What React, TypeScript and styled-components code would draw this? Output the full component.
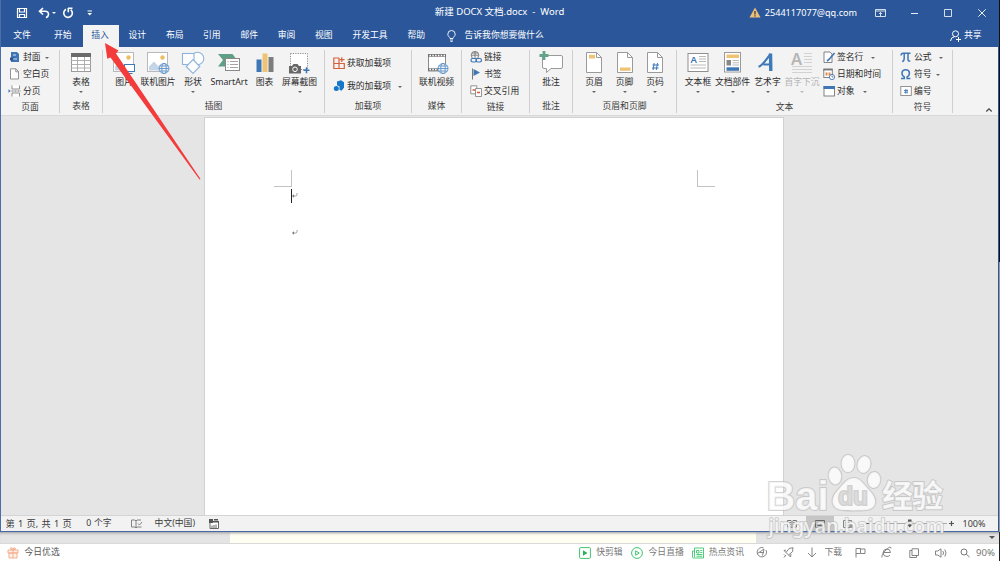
import React from 'react';
import styled, { createGlobalStyle, css } from 'styled-components';

const GlobalStyle = createGlobalStyle`
  * { box-sizing: border-box; }
  html, body { margin: 0; padding: 0; overflow: hidden; }
  body { font-family: "Noto Sans", "Noto Sans CJK SC", sans-serif; font-size: 8.8px; background: #fff; }
  svg { display: block; flex: none; overflow: visible; }
`;

const Screen = styled.div`
  position: relative;
  width: 1000px;
  height: 561px;
  overflow: hidden;
  background: #e4e4e4;
`;

const WordWindow = styled.div`
  width: 999px;
  height: 532px;
  display: flex;
  flex-direction: column;
  border-left: 1px solid #4a6ea9;
  border-bottom: 1px solid #4669a6;
  border-right: 1px solid #2b579a;
  color: #2c2c2c;
`;

const TitleBar = styled.header`
  height: 25px;
  display: grid;
  grid-template-columns: 1fr auto 1fr;
  align-items: center;
  background: #2b579a;
  color: #fff;
  line-height: 23px;
`;

const QuickAccess = styled.div`
  display: flex;
  align-items: center;
  padding-left: 15px;
`;

const Gap = styled.span<{ $w: number }>`
  flex: none;
  width: ${p => p.$w}px;
`;

const Title = styled.div`
  font-size: 9.5px;
  white-space: pre;
  height: 25px;
`;

const TitleActions = styled.div`
  display: flex;
  align-items: center;
  justify-content: flex-end;
  padding-right: 12px;
  height: 23px;
`;

const Account = styled.span`
  font-size: 9.1px;
  margin: 0 18px 0 4px;
`;

const TabBar = styled.nav`
  height: 22px;
  display: flex;
  background: #2b579a;
  color: #fff;
  line-height: 21px;
`;

const Tab = styled.div<{ $w: number; $active?: boolean }>`
  width: ${p => p.$w}px;
  padding-right: 1px;
  text-align: center;
  white-space: nowrap;
  ${p => p.$active && css`background: #f3f3f3; color: #2b579a;`}
`;

const TellMe = styled.div`
  display: flex;
  align-items: center;
  gap: 9px;
  margin-left: 11px;
  height: 21px;
`;

const Share = styled.div`
  display: flex;
  align-items: center;
  gap: 3px;
  height: 21px;
  margin-left: auto;
  padding-right: 16.5px;
`;

const Ribbon = styled.div`
  height: 69px;
  display: flex;
  padding-top: 3px;
  background: #f3f3f3;
  border-bottom: 1px solid #d9d9d9;
`;

const Group = styled.section<{ $w: number }>`
  width: ${p => p.$w}px;
  height: 63px;
  flex: none;
  display: flex;
  flex-direction: column;
  border-right: 1px solid #cfcfcf;
`;

const GroupBody = styled.div<{ $pad?: number }>`
  height: 52px;
  display: flex;
  padding-left: ${p => p.$pad ?? 0}px;
`;

const GroupLabel = styled.div`
  text-align: center;
  line-height: 14px;
  color: #3c3c3c;
`;

const BigButton = styled.div<{ $w: number; $off?: boolean }>`
  width: ${p => p.$w}px;
  flex: none;
  display: flex;
  flex-direction: column;
  align-items: center;
  white-space: nowrap;
  color: ${p => (p.$off ? '#b3b3b3' : 'inherit')};
`;

const BigLabel = styled.span`
  line-height: 14px;
  height: 16px;
  margin-top: 1px;
`;

const Caret = styled.i<{ $color?: string; $s?: number }>`
  flex: none;
  border: ${p => p.$s ?? 2}px solid transparent;
  border-top-color: ${p => p.$color ?? '#666'};
  border-bottom: 0;
`;

const Stack = styled.div<{ $ml?: number; $pitch?: number; $mt?: number }>`
  display: flex;
  flex-direction: column;
  margin-left: ${p => p.$ml ?? 0}px;
  margin-top: ${p => p.$mt ?? -1}px;
  line-height: ${p => p.$pitch ?? 17}px;
`;

const SmallRow = styled.div<{ $gap?: number; $pitch?: number }>`
  display: flex;
  align-items: center;
  white-space: nowrap;
  height: ${p => p.$pitch ?? 17}px;
  gap: ${p => p.$gap ?? 2}px;

  svg { margin-bottom: 1px; }
`;

const Collapse = styled.div`
  margin: auto 6px 3px auto;
`;

const Canvas = styled.main`
  height: 399px;
  display: flex;
  background: #e5e5e5;
  padding: 1px 0 0 203px;
`;

const Paper = styled.article`
  width: 580px;
  background: #fff;
  border: 1px solid #d2d2d2;
  border-bottom: 0;
  padding: 52px 68px 0 69px;
`;

const Margins = styled.div`
  display: flex;
  justify-content: space-between;
`;

const Crop = styled.div<{ $side: 'left' | 'right' }>`
  width: 18px;
  height: 17px;
  border-bottom: 1px solid #c3c3c3;
  ${p => (p.$side === 'left' ? 'border-right' : 'border-left')}: 1px solid #c3c3c3;
`;

const Paragraph = styled.div`
  display: flex;
  align-items: center;
  height: 17px;
  margin: 0 0 20px 17px;
`;

const TextCursor = styled.span<{ $on?: boolean }>`
  width: 1px;
  height: 14px;
  background: ${p => (p.$on ? '#222' : 'transparent')};
`;

const StatusBar = styled.footer`
  height: 16px;
  display: flex;
  align-items: center;
  background: #f2f2f2;
  border-top: 1px solid #d4d4d4;
  line-height: 15px;
  padding-left: 4.500px;
  color: #3c3c3c;
`;

const StatusItem = styled.span<{ $mr?: number; $size?: number; $word?: number }>`
  font-size: ${p => p.$size ?? 8.8}px;
  margin-right: ${p => p.$mr ?? 0}px;
  word-spacing: ${p => p.$word ?? 0}px;
  white-space: nowrap;
`;

const ViewSwitch = styled.div<{ $on?: boolean }>`
  width: 28px;
  height: 15px;
  display: flex;
  align-items: center;
  justify-content: center;
  background: ${p => (p.$on ? '#c6c6c6' : 'transparent')};
`;

const Zoomer = styled.div`
  display: flex;
  align-items: center;
  margin-left: auto;
  padding-right: 12.5px;
`;

const BackStrip = styled.div`
  height: 12px;
  display: flex;
  align-items: center;
  justify-content: flex-end;
  background: linear-gradient(90deg, #e4e4e4 230px, #fffff2 230px, #fffff2 756px, #e4e4e4 756px);
  border-bottom: 1px solid #d9d9d9;
  box-shadow: inset 0 3px 3px -2px #9a9a9a;
  padding-right: 5px;
`;

const BrowserBar = styled.div`
  height: 17px;
  display: flex;
  align-items: center;
  background: #fff;
  color: #777;
  line-height: 17px;
  padding-left: 7px;
`;

const Promo = styled.span`
  color: #555;
`;

const BrowserItems = styled.div`
  display: flex;
  align-items: center;
  margin-left: auto;
  padding-right: 5px;
`;

const BrowserZoom = styled.span`
  font-size: 9.6px;
`;

const ScreenEdge = styled.div`
  position: absolute;
  right: 0;
  top: 0;
  width: 1px;
  height: 561px;
  background: linear-gradient(#111 262px, #999 262px, #999 532px, #222 532px);
`;

const Overlay = styled.svg`
  position: absolute;
  left: 0;
  top: 0;
  pointer-events: none;
`;

const Globe = ({ x, y, r = 5 }: { x: number; y: number; r?: number }) => (
  <g fill="#f3f3f3" stroke="#5b92c9" strokeWidth="0.9">
    <circle cx={x} cy={y} r={r} />
    <ellipse cx={x} cy={y} rx={r * 0.45} ry={r} fill="none" />
    <path d={`M${x - r} ${y}h${2 * r}M${x - r * 0.85} ${y - r / 2}h${r * 1.7}M${x - r * 0.85} ${y + r / 2}h${r * 1.7}`} />
  </g>
);

const Photo = () => (
  <g>
    <rect x="1.500" y="2.500" width="20" height="19" fill="#fff" stroke="#b9b9b9" />
    <path d="M3 20.500v-4l5-5 4.500 5 2.500-2.500 5 5v1.500z" fill="#c3d5e6" />
    <circle cx="16.500" cy="7.500" r="2.200" fill="#eebc62" />
  </g>
);

const NotePage = () => (
  <g>
    <path d="M4.500 2.500h10l5 5v15h-15z" fill="#fff" stroke="#9a9a9a" />
    <path d="M14.500 2.500v5h5" fill="none" stroke="#9a9a9a" />
  </g>
);

const bigIcons: Record<string, React.ReactNode> = {
  table: (
    <g>
      <rect x="2.500" y="3.500" width="19" height="18" fill="#fff" stroke="#9a9a9a" />
      <path d="M2 3h20v4H2z" fill="#6a6a6a" />
      <path d="M2 10.500h20M2 14.500h20M2 18h20M8.500 7v15M15.500 7v15" stroke="#a8a8a8" strokeWidth="0.9" />
    </g>
  ),
  picture: (
    <g>
      <Photo />
      <rect x="12.500" y="14.500" width="10" height="7" fill="#fff" stroke="#3d7ab8" />
      <path d="M14.500 23.500h6" stroke="#3d7ab8" />
    </g>
  ),
  online: (
    <g><Photo /><Globe x={18} y={18.5} /></g>
  ),
  shapes: (
    <g fill="#fdfdfd" stroke="#8db4dc" strokeWidth="1.100">
      <circle cx="16.500" cy="8.500" r="6.300" />
      <rect x="1.500" y="3.500" width="11.500" height="11" />
      <path d="M12 9.500l6.800 7-6.800 7-6.800-7z" />
    </g>
  ),
  smart: (
    <g>
      <path d="M1 4h14.500l4.500 6-4 6.500H1l5-6.500z" fill="#5f9f85" />
      <rect x="8.500" y="8.500" width="14" height="12" fill="#fff" stroke="#8a8a8a" />
      <path d="M10.500 11.500h1M13 11.500h8M10.500 14.500h1M13 14.500h8M10.500 17.500h1M13 17.500h8" stroke="#999" strokeWidth="0.9" />
    </g>
  ),
  chart: (
    <g>
      <path d="M3.500 9.500h5V22h-5z" fill="#3f77b5" />
      <path d="M9.500 3.500h5V22h-5z" fill="#eec373" />
      <path d="M15.500 7h5v15h-5z" fill="#7d7d7d" />
    </g>
  ),
  screenshot: (
    <g>
      <rect x="2.500" y="3.500" width="17" height="16" fill="#fff" stroke="#8e8e8e" strokeDasharray="1.200 1.200" />
      <path d="M1 16h3l1.500-2h4l1.500 2h2v7.500H1z" fill="#686868" />
      <circle cx="7" cy="19.300" r="2.300" fill="none" stroke="#fff" strokeWidth="1" />
      <path d="M18.500 17.300v6M15.500 20.300h6" stroke="#3975b5" strokeWidth="1.500" />
    </g>
  ),
  video: (
    <g>
      <rect x="3.500" y="4.500" width="17" height="16.500" fill="#fff" stroke="#8a8a8a" />
      <path d="M3 5.500h18M3 19.500h18" stroke="#6c6c6c" strokeWidth="2.600" />
      <path d="M4.500 5.500h16M4.500 19.500h16" stroke="#fff" strokeWidth="1.300" strokeDasharray="1.500 1.300" />
      <Globe x={18} y={18.5} />
    </g>
  ),
  comment: (
    <g>
      <path d="M5 5.500h17q1.500 0 1.500 1.500v10q0 1.500-1.500 1.500H12L7.500 22.500v-4H5q-1.500 0-1.500-1.500V7" fill="#fff" stroke="#9a9a9a" />
      <path d="M5 1v9M.5 5.500h9" stroke="#62a487" strokeWidth="2.800" />
    </g>
  ),
  header: (
    <g>
      <NotePage />
      <path d="M7 4.800h6v3.700H7z" fill="#eec373" />
    </g>
  ),
  footer: (
    <g>
      <NotePage />
      <path d="M7 17.500h10.500v3.300H7z" fill="#eec373" />
    </g>
  ),
  number: (
    <g>
      <NotePage />
      <path d="M11.200 13l-1.200 7M14.500 13l-1.200 7M9.500 15h6.500M9 18h6.500" stroke="#3975b5" strokeWidth="1" />
    </g>
  ),
  textbox: (
    <g>
      <rect x="2" y="3.500" width="20" height="18" fill="#fff" stroke="#8f8f8f" />
      <text x="4.500" y="13" fontSize="9.500" fontWeight="600" fill="#3f77b5">A</text>
      <path d="M13 6.500h7M13 9h7M13 11.500h7M4.500 15h15.500M4.500 18h15.500" stroke="#b2b2b2" strokeWidth="0.900" />
    </g>
  ),
  parts: (
    <g>
      <rect x="3.500" y="2.500" width="16" height="19.500" fill="#fff" stroke="#9a9a9a" />
      <path d="M5.500 4.500h12.500v3.500H5.500z" fill="#eec373" />
      <path d="M5.500 10h4.500v5.500H5.500z" fill="#888" />
      <path d="M11.500 10.500h6.500M11.500 12.800h6.500M11.500 15h6.500" stroke="#b2b2b2" strokeWidth="0.900" />
      <path d="M5.500 17.300h12.500v3.500H5.500z" fill="#3f77b5" />
    </g>
  ),
  wordart: (
    <g fill="none" stroke="#4079b7">
      <path d="M2.500 16.800C7 15.500 10.500 9 14.500 4" strokeWidth="2.200" />
      <path d="M14.500 3.500L14.800 21" strokeWidth="3.400" />
      <path d="M6.500 14q4 1 8 .2" strokeWidth="2" />
    </g>
  ),
  dropcap: (
    <g>
      <text x="1" y="14.500" fontSize="16.500" fontWeight="600" fill="#b6b6b6">A</text>
      <path d="M14 3.500h8M14 6.500h8M14 9.500h8M14 12.500h8M2 16.500h20M2 19.500h20M2 22.500h20" stroke="#d2d2d2" />
    </g>
  ),
};

const smallIcons: Record<string, React.ReactNode> = {
  cover: (
    <g><path d="M2 1h6l2 2V11H2z" fill="#3f77b5" /><path d="M1 6.500h4.500v3H1z" fill="#2b579a" /><path d="M4 4h3M4 8h4" stroke="#fff" strokeWidth="0.800" /></g>
  ),
  blank: <path d="M1.500.8h5.500L9.500 3.500V11h-8zM6.800 1v2.800h2.700" fill="#fff" stroke="#888" strokeWidth="0.900" />,
  brk: (
    <g fill="none" stroke="#888" strokeWidth="0.900"><path d="M3 .5V4h7.500V.5M3 11.500V8h7.500v3.500" fill="#fff" /><path d="M2.500 6H12" stroke="#666" strokeDasharray="2 1" /><path d="M-.5 4.300L1.700 6-.5 7.700z" fill="#3f77b5" stroke="none" /></g>
  ),
  store: (
    <g fill="none" stroke="#d9603a" strokeWidth="1.200"><path d="M6 1H.8v10.500H11.300V6.500H.8M6 1v10.500" /><path d="M8.800.2v4.800M6.500 2.600h5" /></g>
  ),
  addin: (
    <g fill="#1477c9"><path d="M4 1.500L8 .3l3 2v5.500l-2.500 3-2-1V6.500L4 5.300z" /><circle cx="3.300" cy="8.500" r="2.500" /></g>
  ),
  link: (
    <g fill="none" stroke="#777" strokeWidth="0.900"><circle cx="5" cy="4.200" r="3.800" /><path d="M1.200 4.200h7.600M5 .4v7.500M2 2h6" /><rect x="1" y="7.500" width="5.500" height="3.500" rx="1.700" stroke="#3f77b5" fill="#f3f3f3" strokeWidth="1.200" /><rect x="6" y="7.500" width="5.500" height="3.500" rx="1.700" stroke="#3f77b5" strokeWidth="1.200" /></g>
  ),
  bookmark: <g><path d="M2.500.5v11" stroke="#777" /><path d="M3.500 1L10 4.500 3.500 8z" fill="#3f77b5" /></g>,
  cross: (
    <g stroke="#888" strokeWidth="0.900" fill="#fff"><path d="M.8.800h6v8h-6z" /><path d="M5.500 3.500h6v8h-6z" /><path d="M2.500 5h2.500M7 7.500h3" stroke="#d65a38" strokeWidth="1.600" /></g>
  ),
  sign: (
    <g><path d="M1 1h6l2 2v8.500H1z" fill="#fff" stroke="#777" strokeWidth="0.900" /><path d="M11.500 2L6 8.500l-2 1.500" stroke="#3f77b5" strokeWidth="1.700" fill="none" /></g>
  ),
  date: (
    <g><rect x=".8" y="1" width="8.500" height="8.500" fill="#fff" stroke="#777" strokeWidth="0.900" /><path d="M.5 1.700h9" stroke="#777" strokeWidth="1.500" /><path d="M2.500 4.500h2v3h-2zM5.500 4.500h2v3h-2z" fill="#e08a4e" /><circle cx="9" cy="9" r="2.600" fill="#fff" stroke="#3f77b5" strokeWidth="0.900" /><path d="M9 7.500V9h1.300" stroke="#555" strokeWidth="0.700" fill="none" /></g>
  ),
  object: <g><rect x="1" y="1.500" width="10.500" height="9.500" fill="#fff" stroke="#777" strokeWidth="0.900" /><path d="M.5 1h11.500v3H.5z" fill="#3f77b5" /></g>,
  pi: <path d="M1 4.500q.3-2.300 2-2.300h7.500M4.200 2.200v5q0 3-2 3.300M8 2.200v6.300q0 2 2.300 1.500" fill="none" stroke="#3f77b5" strokeWidth="1.500" />,
  omega: <path d="M1 10.500H4.300V9C1 7 1 1.800 5.700 1.800s4.700 5.200 1.400 7.200v1.500h3.300" fill="none" stroke="#3f77b5" strokeWidth="1.500" />,
  num: <g><rect x=".8" y="1.500" width="10.500" height="9" fill="#fff" stroke="#888" strokeWidth="0.900" /><path d="M4 5.500h4M4 7.300h4M5.500 4.200v4.300M7 4.200v4.300" stroke="#3f77b5" strokeWidth="0.800" /></g>,
};

const Icon = ({ name, box = 12 }: { name: string; box?: number }) => (
  <svg width={box} height={box} viewBox="0 0 12 12">{smallIcons[name]}</svg>
);

const Big = ({ icon, label, w, caret, off }: { icon: string; label: string; w: number; caret?: boolean; off?: boolean }) => (
  <BigButton $w={w} $off={off}>
    <svg width="24" height="24" viewBox="0 0 24 24">{bigIcons[icon]}</svg>
    <BigLabel>{label}</BigLabel>
    {caret && <Caret $color={off ? '#bbb' : undefined} />}
  </BigButton>
);

const Small = ({ icon, label, caret, gap, pitch }: { icon: string; label: string; caret?: number; gap?: number; pitch?: number }) => (
  <SmallRow $gap={gap} $pitch={pitch}>
    <Icon name={icon} />
    <span>{label}</span>
    {caret !== undefined && <><Gap $w={caret} /><Caret /></>}
  </SmallRow>
);

const tabs: [string, number, boolean?][] = [
  ['文件', 43], ['开始', 38.500], ['插入', 36, true], ['设计', 38.500], ['布局', 36.500], ['引用', 37.500],
  ['邮件', 37.500], ['审阅', 37], ['视图', 37.500], ['开发工具', 55], ['帮助', 37.500],
];

export default function App() {
  return (
    <Screen>
      <GlobalStyle />
      <WordWindow>
        <TitleBar>
          <QuickAccess>
            <svg width="12" height="12" viewBox="0 0 12 12"><path d="M1.500 1.500h9v9h-9zM3.500 1.500v3.500h5V1.500M3.500 10.500V7.500h5v3" fill="none" stroke="#fff" strokeWidth="1.200" /></svg>
            <Gap $w={10} />
            <svg width="12" height="12" viewBox="0 0 12 12"><path d="M5 1L1.500 4.300 5 7.500M1.500 4.300h5.500q3.500 0 3.500 3.200 0 2-2.500 3.200" fill="none" stroke="#fff" strokeWidth="1.600" /></svg>
            <Gap $w={2} />
            <Caret $color="#fff" />
            <Gap $w={6} />
            <svg width="12" height="12" viewBox="0 0 12 12"><path d="M4 2.300A4.300 4.300 0 1 0 8.700 2.700M6 1.300h4.500M6.300 1v4.300" fill="none" stroke="#fff" strokeWidth="1.600" /></svg>
            <Gap $w={13} />
            <svg width="6" height="6" viewBox="0 0 6 6"><path d="M.5 1h4.500" stroke="#fff" /><path d="M.5 3h4.500L2.750 5.500z" fill="#fff" /></svg>
          </QuickAccess>
          <Title>新建 DOCX 文档.docx  -  Word</Title>
          <TitleActions>
            <svg width="12" height="11" viewBox="0 0 12 11"><path d="M6 .5L11.500 10.500H.5z" fill="#ecc078" /><path d="M6 4v3.500M6 8.300v1.200" stroke="#333" strokeWidth="1.200" /></svg>
            <Account>2544117077@qq.com</Account>
            <svg width="11" height="8" viewBox="0 0 11 8"><path d="M.5.500h10v7H.5zM.5 2h10M5.500 7V3.500M4 5l1.500-1.500L7 5" fill="none" stroke="#e6edf6" strokeWidth="0.900" /></svg>
            <Gap $w={24} />
            <svg width="9" height="8" viewBox="0 0 9 8"><path d="M1 4.500h7" stroke="#fff" strokeWidth="0.900" /></svg>
            <Gap $w={25} />
            <svg width="8" height="8" viewBox="0 0 8 8"><path d="M.5.500h7v7h-7z" fill="none" stroke="#e6edf6" strokeWidth="0.900" /></svg>
            <Gap $w={26} />
            <svg width="8" height="8" viewBox="0 0 8 8"><path d="M.3.300l7.400 7.400M7.700.300L.3 7.700" stroke="#fff" strokeWidth="0.900" /></svg>
          </TitleActions>
        </TitleBar>
        <TabBar>
          {tabs.map(([name, w, on]) => <Tab key={name} $w={w} $active={on}>{name}</Tab>)}
          <TellMe>
            <svg width="9" height="12" viewBox="0 0 9 12"><path d="M3 8.500C3 7 .8 6.500.8 4.200a3.700 3.700 0 0 1 7.400 0C8.200 6.500 6 7 6 8.500zM3 10h3M3.500 11.500h2" fill="none" stroke="#fff" strokeWidth="0.900" /></svg>
            <span>告诉我你想要做什么</span>
          </TellMe>
          <Share>
            <svg width="11" height="12" viewBox="0 0 11 12"><circle cx="5.500" cy="3.800" r="3" fill="none" stroke="#fff" /><path d="M.5 11q.5-4 4-4.300M8.500 7v5M6 9.500h5" fill="none" stroke="#fff" /></svg>
            <span>共享</span>
          </Share>
        </TabBar>
        <Ribbon>
          <Group $w={59}>
            <GroupBody $pad={8}>
              <Stack>
                <Small icon="cover" label="封面" caret={-3} />
                <Small icon="blank" label="空白页" />
                <Small icon="brk" label="分页" />
              </Stack>
            </GroupBody>
            <GroupLabel>页面</GroupLabel>
          </Group>
          <Group $w={43}>
            <GroupBody><Big icon="table" label="表格" w={42} caret /></GroupBody>
            <GroupLabel>表格</GroupLabel>
          </Group>
          <Group $w={222}>
            <GroupBody $pad={5}>
              <Big icon="picture" label="图片" w={32} />
              <Big icon="online" label="联机图片" w={36} />
              <Big icon="shapes" label="形状" w={34} caret />
              <Big icon="smart" label="SmartArt" w={38} />
              <Big icon="chart" label="图表" w={33} />
              <Big icon="screenshot" label="屏幕截图" w={37} caret />
            </GroupBody>
            <GroupLabel>插图</GroupLabel>
          </Group>
          <Group $w={87}>
            <GroupBody $pad={8}>
              <Stack $mt={2} $pitch={23}>
                <Small icon="store" label="获取加载项" pitch={23} />
                <Small icon="addin" label="我的加载项" pitch={23} caret={3} />
              </Stack>
            </GroupBody>
            <GroupLabel>加载项</GroupLabel>
          </Group>
          <Group $w={50}>
            <GroupBody><Big icon="video" label="联机视频" w={49} /></GroupBody>
            <GroupLabel>媒体</GroupLabel>
          </Group>
          <Group $w={68}>
            <GroupBody $pad={8}>
              <Stack>
                <Small icon="link" label="链接" />
                <Small icon="bookmark" label="书签" />
                <Small icon="cross" label="交叉引用" />
              </Stack>
            </GroupBody>
            <GroupLabel>链接</GroupLabel>
          </Group>
          <Group $w={43}>
            <GroupBody><Big icon="comment" label="批注" w={42} /></GroupBody>
            <GroupLabel>批注</GroupLabel>
          </Group>
          <Group $w={104}>
            <GroupBody $pad={6}>
              <Big icon="header" label="页眉" w={30} caret />
              <Big icon="footer" label="页脚" w={31} caret />
              <Big icon="number" label="页码" w={30} caret />
            </GroupBody>
            <GroupLabel>页眉和页脚</GroupLabel>
          </Group>
          <Group $w={216}>
            <GroupBody $pad={4}>
              <Big icon="textbox" label="文本框" w={34} caret />
              <Big icon="parts" label="文档部件" w={35} caret />
              <Big icon="wordart" label="艺术字" w={35} caret />
              <Big icon="dropcap" label="首字下沉" w={34} caret off />
              <Stack $ml={4}>
                <Small icon="sign" label="签名行" caret={4} />
                <Small icon="date" label="日期和时间" />
                <Small icon="object" label="对象" caret={4} />
              </Stack>
            </GroupBody>
            <GroupLabel>文本</GroupLabel>
          </Group>
          <Group $w={60}>
            <GroupBody $pad={7}>
              <Stack>
                <Small icon="pi" label="公式" caret={3} />
                <Small icon="omega" label="符号" caret={-1} />
                <Small icon="num" label="编号" />
              </Stack>
            </GroupBody>
            <GroupLabel>符号</GroupLabel>
          </Group>
          <Collapse><svg width="6" height="4" viewBox="0 0 6 4"><path d="M.3 3.500L3 .8l2.700 2.700" fill="none" stroke="#444" strokeWidth="1.200" /></svg></Collapse>
        </Ribbon>
        <Canvas>
          <Paper>
            <Margins><Crop $side="left" /><Crop $side="right" /></Margins>
            {[true, false].map((on, i) => (
              <Paragraph key={i}>
                <TextCursor $on={on} />
                <svg width="5" height="5" viewBox="0 0 5 5"><path d="M5 0v1.500q0 1.500-1.500 1.500H1" fill="none" stroke="#888" strokeWidth="0.800" /><path d="M0 3l2-1.800v3.600z" fill="#777" /></svg>
              </Paragraph>
            ))}
          </Paper>
        </Canvas>
        <StatusBar>
          <StatusItem $mr={14.500} $size={9.2} $word={0.9}>第 1 页,  共 1 页</StatusItem>
          <StatusItem $mr={19} $word={0.5}>0 个字</StatusItem>
          <svg width="11" height="10" viewBox="0 0 11 10"><path d="M5 9L4 8H.5V1H4l1 1v7l1-1h4.500M5 2l1-1h4M7 4.500l1.500 1.500L11 3" fill="none" stroke="#777" strokeWidth="0.900" /></svg>
          <Gap $w={13} />
          <StatusItem $mr={14}>中文(中国)</StatusItem>
          <svg width="10" height="10" viewBox="0 0 10 10"><path d="M1 2.500h8.500v7H1z" fill="#fff" stroke="#666" /><path d="M0 0h4v4H0zM5 0h4v1.500H5zM4 2h6v1.500H4z" fill="#555" /><path d="M3 9V6.500M5 9V6M7 9V5.500" stroke="#666" /></svg>
          <Zoomer>
            <ViewSwitch><svg width="10" height="8" viewBox="0 0 10 8"><path d="M5 1.500L4 .5H.5v6.500H4l1 .8 1-.8h3.500V.5H6zM5 1.500v6M1.500 2.500H4M1.500 4.500H4M6 2.500h2.500M6 4.500h2.500" fill="none" stroke="#666" strokeWidth="0.900" /></svg></ViewSwitch>
            <ViewSwitch $on><svg width="10" height="8" viewBox="0 0 10 8"><path d="M.5.500h9v7h-9zM2 2.500h6M2 4h6M2 5.500h6" fill="none" stroke="#666" /></svg></ViewSwitch>
            <ViewSwitch><svg width="10" height="8" viewBox="0 0 10 8"><path d="M.5.500h8v7h-8zM2 2.500h5M2 4h4M2 5.500h3" fill="none" stroke="#777" strokeWidth="0.900" /><circle cx="8" cy="6" r="2" fill="#999" /></svg></ViewSwitch>
            <Gap $w={3} />
            <svg width="90" height="9" viewBox="0 0 90 9"><path d="M.5 4.500h5M84 4.500h5M86.500 2v5" stroke="#555" strokeWidth="1.200" /><path d="M8 4.500h74" stroke="#aaa" /><path d="M43 .5h3.500v6L44.750 8.500 43 6.500z" fill="#555" /></svg>
            <Gap $w={8} />
            <StatusItem $size={9}>100%</StatusItem>
          </Zoomer>
        </StatusBar>
      </WordWindow>
      <BackStrip><Caret $color="#555" $s={3} /></BackStrip>
      <BrowserBar>
        <svg width="12" height="12" viewBox="0 0 12 12"><path d="M1 3h10v3H1zM2 6h8v5H2zM6 3v8M6 3Q3 3 3.500 1T6 3q0-3 2-2t-2 2" fill="#fff1e9" stroke="#f3ae8d" /></svg>
        <Gap $w={5.5} />
        <Promo>今日优选</Promo>
        <BrowserItems>
          <svg width="12" height="12" viewBox="0 0 12 12"><rect x=".6" y=".6" width="10.800" height="10.800" rx="1" fill="#fff" stroke="#3cc56c" /><path d="M4 3.300L8.500 6 4 8.700z" fill="#24b356" /></svg>
          <Gap $w={5.5} /><span>快剪辑</span><Gap $w={8} />
          <svg width="12" height="12" viewBox="0 0 12 12"><circle cx="6" cy="6" r="5.400" fill="none" stroke="#3cc56c" /><path d="M4.700 3.800L8.200 6 4.700 8.200z" fill="none" stroke="#3cc56c" /></svg>
          <Gap $w={6} /><span>今日直播</span><Gap $w={8} />
          <svg width="12" height="12" viewBox="0 0 12 12"><path d="M2.500 1h9v10h-10q-1 0-1-1V4h2zM2.500 4v6M4.500 3.500h2.500V6H4.500zM8.300 3.500h2M8.300 5.500h2M4.500 7.500h5.800M4.500 9.200h5.800" fill="none" stroke="#3cc56c" strokeWidth="0.900" /></svg>
          <Gap $w={5} /><span>热点资讯</span><Gap $w={12.5} />
          <svg width="11" height="11" viewBox="0 0 11 11"><path d="M10 3A4.700 4.700 0 1 1 7.500.800M1.500 6.500L8 2 6.500 8.500M3.500 5.500h4.500" fill="none" stroke="#777" strokeWidth="0.900" /></svg>
          <Gap $w={16} />
          <svg width="11" height="11" viewBox="0 0 11 11"><path d="M3 5.500L6 1.500l4-.8-.5 4L5.500 8zM3 3L1 3.500 3 5.500M5.500 8l2 2L8 7M3 8L1 10.500M1 7.500l1 1" fill="none" stroke="#777" strokeWidth="0.900" /></svg>
          <Gap $w={13} />
          <svg width="10" height="11" viewBox="0 0 10 11"><path d="M5 .5v9M1 6l4 4 4-4" fill="none" stroke="#777" strokeWidth="0.900" /></svg>
          <Gap $w={7} /><span>下载</span><Gap $w={12.5} />
          <svg width="11" height="11" viewBox="0 0 11 11"><path d="M1 10.500V1.500h4.500v5H1M5.500 2h4.500v4.500H6" fill="none" stroke="#777" strokeWidth="0.900" /></svg>
          <Gap $w={15} />
          <svg width="11" height="11" viewBox="0 0 11 11"><path d="M2.500 5.500h7q-.3-3.500-3.700-3.500T2 6q.3 3.500 4 3.500 2 0 3-1.500M1 10.500Q0 8 5 3t5-1.500" fill="none" stroke="#777" strokeWidth="0.900" /></svg>
          <Gap $w={17} />
          <svg width="10" height="10" viewBox="0 0 10 10"><path d="M3 .8h6.500v6.700H3zM3 2.500H.8v7H7.500v-2" fill="none" stroke="#777" strokeWidth="0.900" /></svg>
          <Gap $w={16} />
          <svg width="12" height="10" viewBox="0 0 12 10"><path d="M.5 3h2.300L6 .8v8.400L2.800 7H.5zM7.800 3q1.500 2 0 4M9.800 1.500q2.500 3.500 0 7" fill="none" stroke="#777" strokeWidth="0.900" /></svg>
          <Gap $w={13} />
          <svg width="10" height="10" viewBox="0 0 10 10"><circle cx="4" cy="4" r="3" fill="none" stroke="#777" /><path d="M6.300 6.300L9.500 9" stroke="#777" /></svg>
          <Gap $w={6.5} /><BrowserZoom>90%</BrowserZoom>
        </BrowserItems>
      </BrowserBar>
      <ScreenEdge />
      <Overlay width="1000" height="561" viewBox="0 0 1000 561">
        <path d="M105 43L118.500 50.500 116 53.500 200.500 179 199.500 179.500 110.500 57.500 107.300 58.700z" fill="#f43b3b" />
        <g fill="#fff" fillOpacity="0.780" stroke="#b5b5b5" strokeOpacity="0.600" strokeWidth="2" paintOrder="stroke" strokeLinejoin="round">
          <ellipse cx="835" cy="476" rx="6.300" ry="8.500" transform="rotate(-8 835 476)" />
          <ellipse cx="848" cy="463.500" rx="6.500" ry="8.800" />
          <ellipse cx="864" cy="464.500" rx="6.500" ry="8.500" transform="rotate(12 864 464.500)" />
          <ellipse cx="874" cy="480" rx="6.300" ry="8" transform="rotate(8 874 480)" />
          <path d="M854 478c7 0 11 8 16 13 8 8 7 18-4 19-5 .5-19 .5-24 0-11-1-12-11-5-19 5-5 9-13 17-13z" />
          <text x="766.500" y="509.500" fontFamily="Liberation Sans" fontWeight="700" fontSize="41" textLength="62" lengthAdjust="spacingAndGlyphs">Bai</text>
          <text x="838" y="505" fontFamily="Liberation Sans" fontWeight="700" fontSize="25" textLength="30" fill="#d8d8d8">du</text>
          <text x="882" y="507" fontFamily="Noto Sans CJK SC" fontWeight="700" fontSize="31" textLength="61">经验</text>
          <text x="768.500" y="533" fontFamily="Noto Sans" fontSize="20" fontWeight="500" textLength="176">jingyan.baidu.com</text>
        </g>
      </Overlay>
    </Screen>
  );
}
